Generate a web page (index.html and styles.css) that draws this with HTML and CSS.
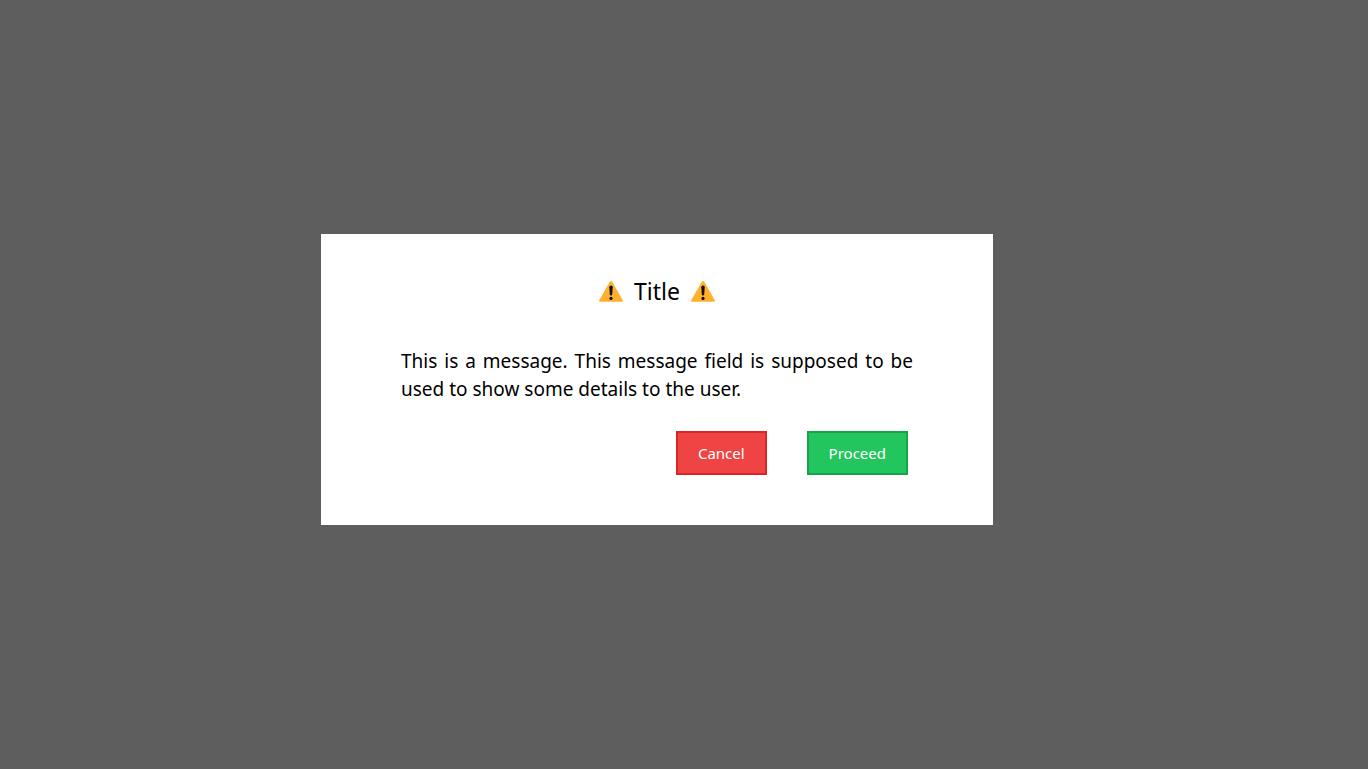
FILE: index.html
```html
<!DOCTYPE html>
<html lang="en">
<head>
<meta charset="utf-8">
<meta name="viewport" content="width=device-width, initial-scale=1">
<title>Title</title>
<link rel="stylesheet" href="styles.css">
</head>
<body>
<div class="overlay">
  <section class="dialog" role="alertdialog" aria-modal="true" aria-labelledby="dialog-title" aria-describedby="dialog-message">
    <header class="dialog-header">
      <svg class="warning" viewBox="0 0 24 24" aria-hidden="true"><path fill="#ffb02e" d="M10.8 2.8Q12 1.2 13.2 2.8L23.8 21.2Q24.3 22.6 22.9 22.8H1.1Q-.3 22.6 .2 21.2Z"/><path fill="#111" d="M12 6.6Q13.8 6.6 13.7 8.3L13.2 15.2Q13 16.6 12 16.6T10.8 15.2L10.3 8.3Q10.2 6.6 12 6.6Z"/><circle fill="#111" cx="12" cy="19.4" r="1.6"/></svg>
      <h1 class="dialog-title" id="dialog-title">Title</h1>
      <svg class="warning" viewBox="0 0 24 24" aria-hidden="true"><path fill="#ffb02e" d="M10.8 2.8Q12 1.2 13.2 2.8L23.8 21.2Q24.3 22.6 22.9 22.8H1.1Q-.3 22.6 .2 21.2Z"/><path fill="#111" d="M12 6.6Q13.8 6.6 13.7 8.3L13.2 15.2Q13 16.6 12 16.6T10.8 15.2L10.3 8.3Q10.2 6.6 12 6.6Z"/><circle fill="#111" cx="12" cy="19.4" r="1.6"/></svg>
    </header>
    <p class="message" id="dialog-message">This is a message. This message field is supposed to be used to show some details to the user.</p>
    <div class="actions">
      <button class="button cancel" type="button">Cancel</button>
      <button class="button proceed" type="button">Proceed</button>
    </div>
  </section>
</div>
</body>
</html>
```
FILE: styles.css
```css
* {
  box-sizing: border-box;
}

body {
  margin: 0;
  background: #5e5e5e;
  color: #000;
  font-family: "Noto Sans", "Open Sans", sans-serif;
}

.overlay {
  display: flex;
  align-items: center;
  justify-content: center;
  min-height: 100vh;
  padding: 0 54px 10px 0;
}

.dialog {
  width: 100%;
  max-width: 672px;
  padding: 40px 80px 50px;
  background: #fff;
}

.dialog-header {
  display: flex;
  align-items: center;
  justify-content: center;
  gap: 11px;
  margin-bottom: 39px;
}

.warning {
  width: 24px;
  height: 24px;
}

.dialog-title {
  margin: 0;
  font-size: 23px;
  font-weight: 400;
  line-height: 34px;
}

.message {
  margin: 0 0 28px;
  font-size: 19px;
  line-height: 28px;
  text-align: justify;
}

.actions {
  display: flex;
  justify-content: flex-end;
  gap: 40px;
  padding-right: 5px;
}

.button {
  height: 44px;
  padding: 0 20px;
  border: 2px solid;
  color: #fff;
  font-family: inherit;
  font-size: 15px;
  line-height: 24px;
}

.cancel {
  background: #ef4444;
  border-color: #dc2626;
}

.proceed {
  background: #22c55e;
  border-color: #16a34a;
}
```
